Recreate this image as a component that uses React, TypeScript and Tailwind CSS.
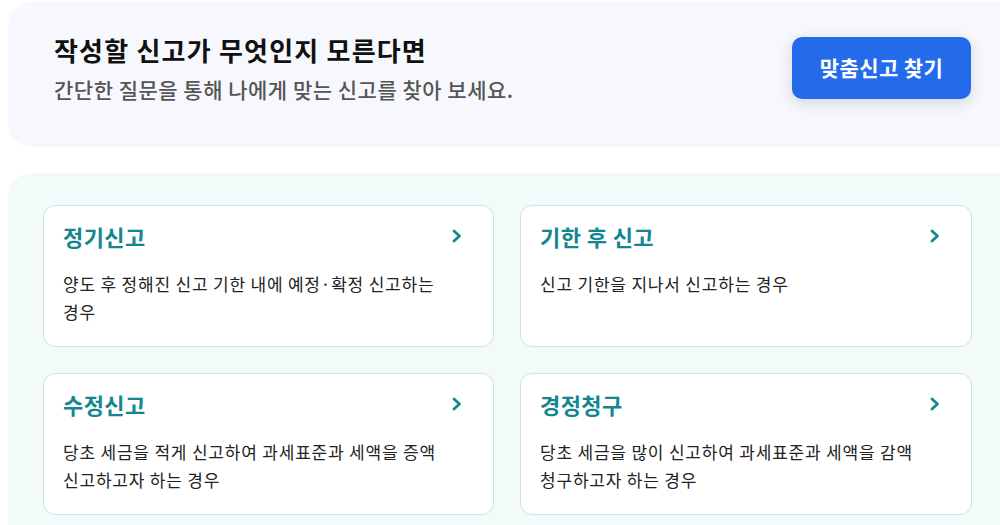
import React from "react";

const cards = [
  { title: "정기신고", desc: "양도 후 정해진 신고 기한 내에 예정·확정 신고하는 경우" },
  { title: "기한 후 신고", desc: "신고 기한을 지나서 신고하는 경우" },
  { title: "수정신고", desc: "당초 세금을 적게 신고하여 과세표준과 세액을 증액 신고하고자 하는 경우" },
  { title: "경정청구", desc: "당초 세금을 많이 신고하여 과세표준과 세액을 감액 청구하고자 하는 경우" },
];

function Chevron() {
  return (
    <svg width="12" height="14" viewBox="0 0 12 14" fill="none" className="shrink-0">
      <path d="M3 2 L8.5 7 L3 12" stroke="#14868f" strokeWidth="2.8" strokeLinecap="round" strokeLinejoin="round" />
    </svg>
  );
}

export default function App() {
  return (
    <div
      className="w-[1000px] h-[525px] overflow-hidden bg-white pl-2 pt-[2px]"
      style={{ fontFamily: '"Noto Sans CJK KR", "Noto Sans", sans-serif' }}
    >
      <div className="w-[1010px] h-[145px] rounded-l-[24px] bg-[#f7f8fd] pl-[46px] pr-[47px] pt-[32px] flex items-start justify-between">
        <div className="flex flex-col">
          <h1 className="text-[26px] leading-[32px] font-bold text-[#111] tracking-[1.2px]">작성할 신고가 무엇인지 모른다면</h1>
          <p className="text-[21px] leading-[30px] font-medium text-[#555] mt-[8px] tracking-[0.5px]">간단한 질문을 통해 나에게 맞는 신고를 찾아 보세요.</p>
        </div>
        <button className="mt-[3px] w-[179px] h-[62px] rounded-[10px] bg-[#246beb] text-white text-[21px] font-semibold shadow-[0_4px_14px_rgba(30,40,80,0.16)] tracking-[0.4px]">
          맞춤신고 찾기
        </button>
      </div>
      <div className="mt-[26px] w-[1010px] h-[400px] rounded-tl-[24px] bg-[#f2fbfa] pl-[35px] pt-[32px]">
        <div className="grid grid-cols-[451px_452px] gap-x-[26px] gap-y-[26px]">
          {cards.map((c) => (
            <div
              key={c.title}
              className="h-[142px] rounded-[12px] border border-[#c6e3e8] bg-white pl-[19px] pr-[30px] pt-[16px]"
            >
              <div className="flex items-center justify-between h-[28px]">
                <span className="text-[22px] leading-[28px] font-bold text-[#14868f] tracking-[0.4px]">{c.title}</span>
                <Chevron />
              </div>
              <p className="mt-[20px] max-w-[390px] text-[17px] leading-[28px] text-[#222] tracking-[0.8px] break-keep">{c.desc}</p>
            </div>
          ))}
        </div>
      </div>
    </div>
  );
}
